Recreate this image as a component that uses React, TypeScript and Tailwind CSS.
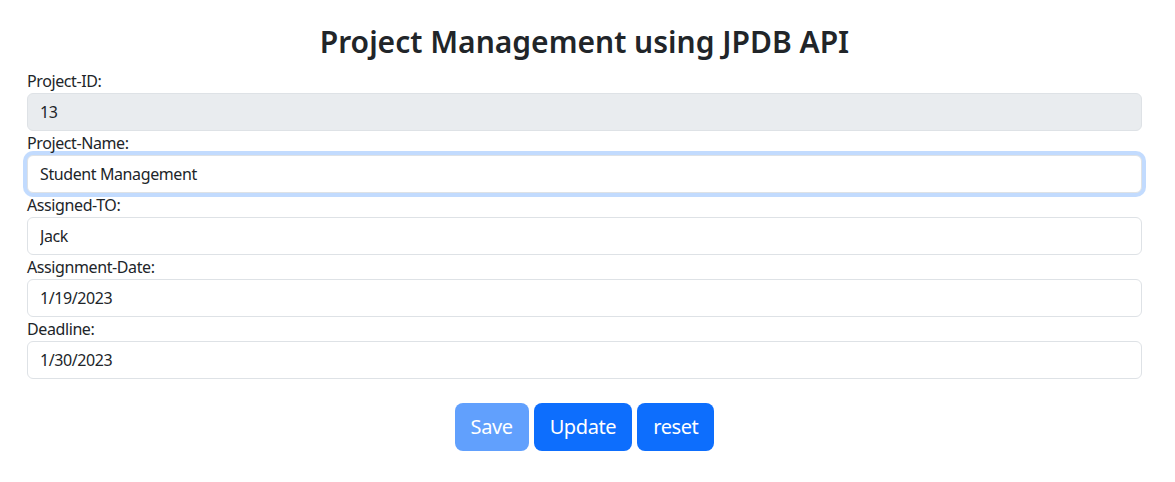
import { useState } from 'react';

const FONT = "font-['Noto_Sans','Liberation_Sans',sans-serif]";

const inputBase =
  'block w-full h-[38px] px-3 text-[16px] tracking-[-0.4px] text-[#212529] rounded-[6px] border border-[#dee2e6] outline-none';

function Field({
  label,
  value,
  disabled,
  focused,
}: {
  label: string;
  value: string;
  disabled?: boolean;
  focused?: boolean;
}) {
  const [val, setVal] = useState(value);
  return (
    <div>
      <label className="block h-[24px] text-[16px] leading-[24px] tracking-[-0.4px] text-[#212529]">
        {label}
      </label>
      <input
        className={
          inputBase +
          (disabled ? ' bg-[#e9ecef]' : ' bg-white') +
          (focused ? ' border-[#86b7fe] shadow-[0_0_0_4px_rgba(13,110,253,0.25)]' : '')
        }
        value={val}
        disabled={disabled}
        onChange={(e) => setVal(e.target.value)}
      />
    </div>
  );
}

export default function App() {
  return (
    <div className={`${FONT} min-h-screen bg-white text-[#212529]`}>
      <div className="ml-[27px] w-[1115px] pt-[23px]">
        <h2 className="text-center text-[30px] leading-[38px] font-semibold mb-[8px]">
          Project Management using JPDB API
        </h2>
        <form className="flex flex-col">
          <Field label="Project-ID:" value="13" disabled />
          <Field label="Project-Name:" value="Student Management" focused />
          <Field label="Assigned-TO:" value="Jack" />
          <Field label="Assignment-Date:" value="1/19/2023" />
          <Field label="Deadline:" value="1/30/2023" />
          <div className="mt-[24px] flex justify-center gap-[5px]">
            <button
              type="button"
              disabled
              className="h-[48px] px-4 rounded-[8px] bg-[#0d6efd] opacity-65 text-white text-[20px] tracking-[-0.4px]"
            >
              Save
            </button>
            <button
              type="button"
              className="h-[48px] px-4 rounded-[8px] bg-[#0d6efd] text-white text-[20px] tracking-[-0.4px]"
            >
              Update
            </button>
            <button
              type="button"
              className="h-[48px] px-4 rounded-[8px] bg-[#0d6efd] text-white text-[20px] tracking-[-0.4px]"
            >
              reset
            </button>
          </div>
        </form>
      </div>
    </div>
  );
}
